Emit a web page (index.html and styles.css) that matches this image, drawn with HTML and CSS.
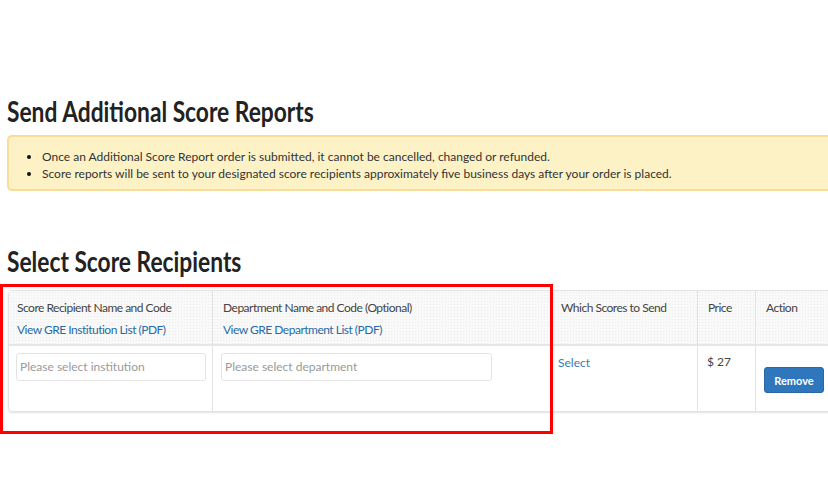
FILE: index.html
```html
<!DOCTYPE html>
<html>
<head>
<meta charset="utf-8">
<link rel="stylesheet" href="styles.css">
</head>
<body>
<div class="page">
  <h1 class="title"><span class="title-text">Send Additional Score Reports</span></h1>
  <div class="notice">
    <ul>
      <li>Once an Additional Score Report order is submitted, it cannot be cancelled, changed or refunded.</li>
      <li>Score reports will be sent to your designated score recipients approximately five business days after your order is placed.</li>
    </ul>
  </div>
  <h2 class="title title-2"><span class="title-text">Select Score Recipients</span></h2>
  <div class="table-wrap">
    <table class="recipients">
      <thead>
        <tr>
          <th class="c1">Score Recipient Name and Code<a class="link" href="#">View GRE Institution List (PDF)</a></th>
          <th class="c2">Department Name and Code (Optional)<a class="link" href="#">View GRE Department List (PDF)</a></th>
          <th class="c3">Which Scores to Send</th>
          <th class="c4">Price</th>
          <th class="c5">Action</th>
        </tr>
      </thead>
      <tbody>
        <tr>
          <td class="c1"><div class="input inst">Please select institution</div></td>
          <td class="c2"><div class="input dept">Please select department</div></td>
          <td class="c3"><a class="select" href="#">Select</a></td>
          <td class="c4"><span class="price">$ 27</span></td>
          <td class="c5"><button class="btn">Remove</button></td>
        </tr>
      </tbody>
    </table>
    <div class="highlight"></div>
  </div>
</div>
</body>
</html>
```

FILE: styles.css
```css
html, body {
  margin: 0;
  padding: 0;
  background: #fff;
  overflow: hidden;
}
body {
  font-family: Lato, "DejaVu Sans Condensed", sans-serif;
  color: #333;
  width: 828px;
  height: 500px;
}
.page {
  padding-top: 94px;
}
.title {
  margin: 0 0 0 7px;
  font-size: 29px;
  line-height: 34px;
  font-weight: bold;
  color: #222;
  white-space: nowrap;
}
.title-text {
  display: inline-block;
  transform: scaleX(0.785);
  transform-origin: 0 50%;
}
.notice {
  margin: 7px -10px 0 7px;
  background: #fcf2c6;
  border: 2px solid #f8dc97;
  border-right: none;
  border-radius: 5px 0 0 5px;
  padding: 11px 0 0 0;
  box-sizing: border-box;
  height: 56px;
}
.notice ul {
  margin: 0;
  padding-left: 33px;
  font-size: 12px;
  line-height: 17px;
  color: #333;
}
.notice li::marker {
  color: #111;
}
.title-2 {
  margin-top: 53px;
}
.table-wrap {
  position: relative;
  margin-top: 12px;
  height: 160px;
}
.recipients {
  margin-left: 8px;
  border-collapse: separate;
  border-spacing: 0;
  width: 830px;
  table-layout: fixed;
  border: 1px solid #e3e3e3;
  border-radius: 4px;
  box-shadow: 0 1px 2px rgba(0,0,0,0.12);
  font-size: 12px;
}
.recipients th {
  height: 55px;
  box-sizing: border-box;
  text-align: left;
  vertical-align: top;
  font-weight: normal;
  color: #444;
  padding: 6px 10px 0 10px;
  line-height: 22px;
  letter-spacing: -0.5px;
  background-color: #f9f9f9;
  background-image: radial-gradient(#ededed 0.6px, transparent 0.8px);
  background-size: 3px 3px;
  border-bottom: 2px solid #e6e6e6;
  border-right: 1px solid #e3e3e3;
}
.recipients th.c1 { padding-left: 8px; }
.recipients td {
  height: 65px;
  box-sizing: border-box;
  vertical-align: top;
  padding: 7px 7px 0 7px;
  border-right: 1px solid #e3e3e3;
}
.recipients th:last-child, .recipients td:last-child {
  border-right: none;
}
.c1 { width: 204px; }
.c2 { width: 338px; }
.c3 { width: 147px; }
.c4 { width: 58px; }
.link {
  display: block;
  color: #2a6aa5;
  text-decoration: none;
}
.input {
  height: 28px;
  box-sizing: border-box;
  border: 1px solid #e4e4e4;
  border-radius: 3px;
  font-size: 12px;
  line-height: 26px;
  padding-left: 3px;
  color: #9a9a9a;
}
.inst { width: 190px; }
.dept { width: 271px; }
td.c2 { padding-left: 8px; }
.select {
  display: block;
  color: #3b79b4;
  text-decoration: none;
  margin-top: 2px;
  font-size: 12px;
}
.price {
  display: block;
  margin-top: 1px;
  padding-left: 2px;
  color: #444;
  font-size: 12px;
}
.btn {
  margin-top: 14px;
  margin-left: 1px;
  width: 60px;
  height: 26px;
  border: 1px solid #2867a8;
  border-radius: 3px;
  background: #2f77bd;
  color: #fff;
  font-family: Lato, sans-serif;
  font-weight: bold;
  font-size: 11px;
  padding: 0;
}
.highlight {
  position: absolute;
  left: 0;
  top: -6px;
  width: 553px;
  height: 150px;
  box-sizing: border-box;
  border: 3px solid #ff0000;
  pointer-events: none;
}
```
